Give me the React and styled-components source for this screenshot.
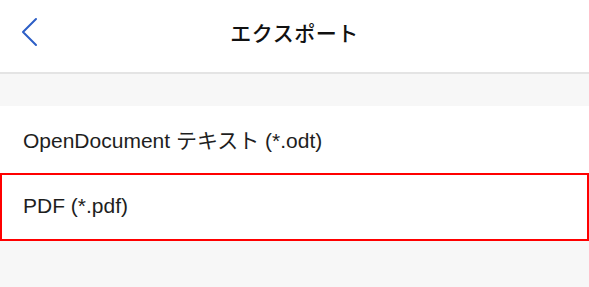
import React from 'react'
import styled, { createGlobalStyle } from 'styled-components'

const GlobalStyle = createGlobalStyle`
    html, body {
        margin: 0;
        padding: 0;
        background-color: #f7f7f7;
    }
    body {
        font-family: "Liberation Sans", "Noto Sans CJK JP", sans-serif;
    }
`

const Screen = styled.div`
    display: flex;
    flex-direction: column;
    width: 100%;
    min-height: 287px;
    background-color: #f7f7f7;
`

const Header = styled.header`
    display: grid;
    grid-template-columns: 60px 1fr 60px;
    align-items: center;
    height: 64px;
    padding-bottom: 8px;
    background-color: #ffffff;
    border-bottom: 2px solid #e4e4e4;
`

const BackButton = styled.button`
    display: flex;
    align-items: center;
    justify-content: flex-start;
    padding: 0 0 0 20px;
    margin: 0;
    border: none;
    background: none;
    cursor: pointer;
`

const Title = styled.h1`
    margin: 0;
    text-align: center;
    font-family: "Noto Sans CJK JP", sans-serif;
    font-size: 21px;
    font-weight: 500;
    letter-spacing: 0.5px;
    color: #111111;
`

const Gap = styled.div`
    height: 32px;
`

const List = styled.div`
    display: flex;
    flex-direction: column;
`

const Row = styled.div`
    display: flex;
    align-items: center;
    box-sizing: border-box;
    height: ${p => (p.$selected ? '68px' : '67px')};
    padding-left: ${p => (p.$selected ? '21px' : '23px')};
    padding-bottom: 2px;
    background-color: #ffffff;
    border: ${p => (p.$selected ? '2px solid #ff0000' : 'none')};
    font-size: 21px;
    color: #1e1e1e;
`

const Chevron = () => (
    <svg width="18" height="30" viewBox="0 0 18 30" fill="none">
        <path d="M16 2 L3 15 L16 28" stroke="#2d5fc6" strokeWidth="2" strokeLinecap="round" strokeLinejoin="round" />
    </svg>
)

const App = () => {
    return (
        <>
            <GlobalStyle />
            <Screen>
                <Header>
                    <BackButton aria-label="戻る">
                        <Chevron />
                    </BackButton>
                    <Title>エクスポート</Title>
                    <div />
                </Header>
                <Gap />
                <List>
                    <Row>OpenDocument テキスト (*.odt)</Row>
                    <Row $selected>PDF (*.pdf)</Row>
                </List>
            </Screen>
        </>
    )
}

export default App
